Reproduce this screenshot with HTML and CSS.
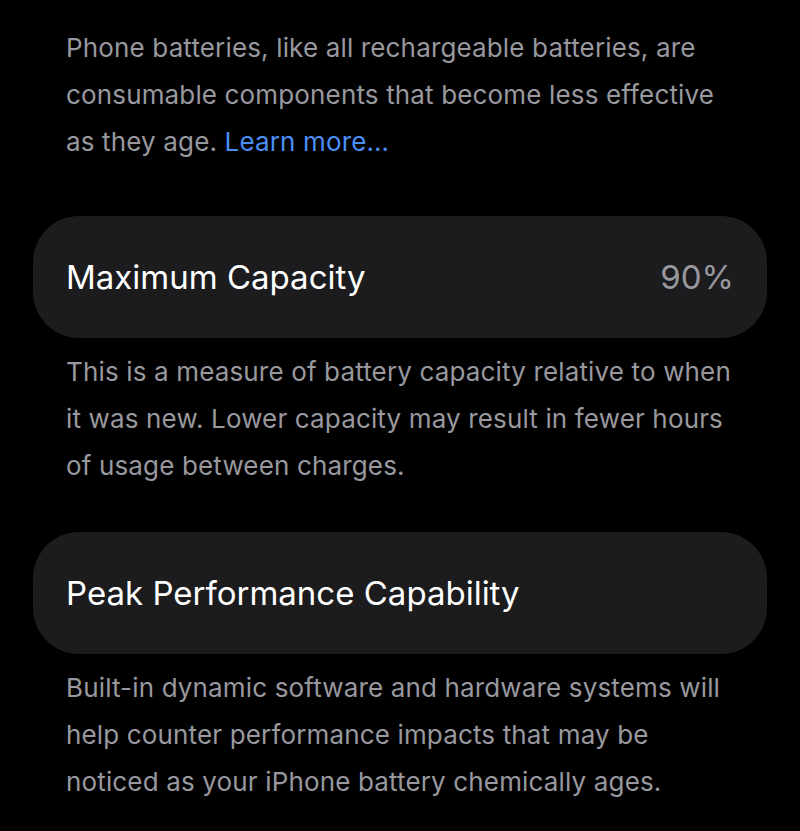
FILE: index.html
```html
<!DOCTYPE html>
<html lang="en">

<head>
  <meta charset="utf-8" />
  <meta name="viewport" content="width=device-width, initial-scale=1" />

  <title>Battery Health</title>

  <link rel="stylesheet" href="styles.css">
</head>

<body>
  <div id="container">
    <p class="note">Phone batteries, like all rechargeable batteries, are<br>
      consumable components that become less effective<br>
      as they age. <a href="#">Learn more…</a></p>

    <div class="cell">
      <span class="label">Maximum Capacity</span>
      <span class="value">90%</span>
    </div>

    <p class="note">This is a measure of battery capacity relative to when<br>
      it was new. Lower capacity may result in fewer hours<br>
      of usage between charges.</p>

    <div class="cell second">
      <span class="label">Peak Performance Capability</span>
    </div>

    <p class="note">Built-in dynamic software and hardware systems will<br>
      help counter performance impacts that may be<br>
      noticed as your iPhone battery chemically ages.</p>
  </div>
</body>

</html>
```

FILE: styles.css
```css
body {
  margin: 0;
  background-color: #000;
  font-family: Inter, "Noto Sans", sans-serif;
  overflow: hidden;
}

#container {
  padding: 24px 33px 0 33px;
}

.note {
  margin: 0;
  padding: 0 33px;
  font-size: 26px;
  letter-spacing: 0.15px;
  line-height: 47px;
  color: #98989e;
}

.note a {
  color: #4c8ef5;
  text-decoration: none;
}

.cell {
  display: flex;
  align-items: center;
  justify-content: space-between;
  height: 122px;
  margin: 51px 0 10px 0;
  padding: 0 33px;
  border-radius: 46px;
  background-color: #1c1c1e;
}

.cell.second {
  margin-top: 43px;
}

.label {
  font-size: 33px;
  color: #fff;
}

.value {
  font-size: 33px;
  color: #98989e;
}
```
